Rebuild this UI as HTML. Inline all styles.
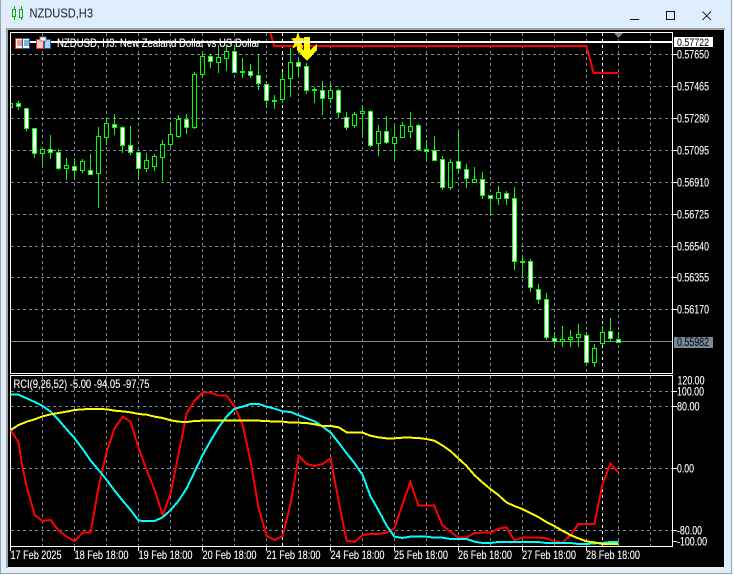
<!DOCTYPE html>
<html><head><meta charset="utf-8"><style>
html,body{margin:0;padding:0;width:734px;height:575px;overflow:hidden;background:#deeefc}
svg{display:block;position:absolute;left:0;top:0}
text{font-family:"Liberation Sans",sans-serif;font-size:12px;fill:#fff;stroke:#fff;stroke-width:.12px}
</style></head><body>
<svg width="734" height="575" viewBox="0 0 734 575">
<rect width="734" height="575" fill="#deeefc"/>
<path d="M0 0H734" stroke="#e8f2fc"/>
<rect x="0" y="0" width="1" height="575" fill="#9aa3ad"/>
<rect x="731" y="0" width="1" height="575" fill="#9aa3ad"/>
<rect x="732" y="0" width="2" height="575" fill="#f4f8fc"/>
<rect x="0" y="573" width="732" height="1" fill="#9aa3ad"/>
<rect x="0" y="574" width="734" height="1" fill="#f4f8fc"/>
<rect x="6" y="28" width="719" height="2" fill="#a0a0a0"/>
<rect x="6" y="28" width="2" height="540" fill="#a0a0a0"/>
<rect x="8" y="567" width="717" height="2" fill="#f0f0f0"/>
<rect x="724" y="30" width="1" height="538" fill="#f0f0f0"/>
<rect x="8" y="30" width="716" height="537" fill="#000"/>

<!-- title bar -->
<g shape-rendering="crispEdges" fill="none" stroke="#00b400">
<path d="M14.5 6V20M21.5 6V20"/>
<rect x="12.5" y="9.5" width="3" height="7" fill="#deeefc"/>
<rect x="19.5" y="9.5" width="3" height="8" fill="#deeefc"/>
</g>
<text x="29.5" y="17.5" style="font-size:13px;fill:#1c1c34;stroke:none" textLength="63.5" lengthAdjust="spacingAndGlyphs">NZDUSD,H3</text>
<rect x="630" y="19" width="9" height="1" fill="#111"/>
<rect x="666.5" y="11.5" width="8" height="8" fill="none" stroke="#111"/>
<path d="M702.5 11.5L711 20M711 11.5L702.5 20" stroke="#222" fill="none"/>

<!-- grid -->
<g stroke="#778899" fill="none" stroke-dasharray="3 3" shape-rendering="crispEdges">
<path d="M11 54.5H672M11 86.5H672M11 118.5H672M11 150.5H672M11 182.5H672M11 214.5H672M11 246.5H672M11 277.5H672M11 309.5H672"/>
<path d="M11 391.5H672M11 406.5H672M11 468.5H672M11 530.5H672"/>
<path d="M42.5 33V373M74.5 33V373M106.5 33V373M138.5 33V373M170.5 33V373M202.5 33V373M234.5 33V373M266.5 33V373M298.5 33V373M330.5 33V373M362.5 33V373M394.5 33V373M426.5 33V373M458.5 33V373M490.5 33V373M522.5 33V373M554.5 33V373M586.5 33V373M618.5 33V373M650.5 33V373"/>
<path d="M42.5 376V546M74.5 376V546M106.5 376V546M138.5 376V546M170.5 376V546M202.5 376V546M234.5 376V546M266.5 376V546M298.5 376V546M330.5 376V546M362.5 376V546M394.5 376V546M426.5 376V546M458.5 376V546M490.5 376V546M522.5 376V546M554.5 376V546M586.5 376V546M618.5 376V546M650.5 376V546"/>
</g>
<path d="M282.5 33V546M602.5 33V546" stroke="#fff" stroke-dasharray="3 3" fill="none" shape-rendering="crispEdges"/>
<path d="M11 341.5H672" stroke="#778899" fill="none" shape-rendering="crispEdges"/>

<!-- wicks -->
<path shape-rendering="crispEdges" stroke="#00ff00" fill="none" d="M18.5 101V110M26.5 108V131M34.5 128V158M42.5 149V165M50.5 135V159M58.5 149V170M66.5 158V180M74.5 158V178M82.5 159V173M90.5 154V175M98.5 127V208M106.5 117V145M114.5 114V135M122.5 126V153M130.5 126V155M138.5 152V178M146.5 153V172M154.5 154V171M162.5 140V181M170.5 122V147M178.5 115V138M186.5 114V134M194.5 72V129M202.5 53V78M210.5 54V68M218.5 45V73M226.5 45V71M234.5 45V73M242.5 58V78M250.5 64V78M258.5 54V90M266.5 84V106M274.5 95V109M282.5 72V103M290.5 48V97M298.5 58V76M306.5 63V94M314.5 87V103M322.5 81V115M330.5 84V103M338.5 89V118M346.5 112V130M354.5 112V128M362.5 107V135M370.5 110V147M378.5 125V156M386.5 116V144M394.5 125V160M402.5 122V138M410.5 112V138M418.5 124V151M426.5 140V161M434.5 136V161M442.5 156V190M450.5 159V190M458.5 132V173M466.5 164V188M474.5 167V183M482.5 172V199M490.5 195V216M498.5 186V205M506.5 191V205M514.5 187V270M522.5 255V277M530.5 259V292M538.5 284V304M546.5 293V340M554.5 332V347M562.5 326V347M570.5 330V347M578.5 324V347M586.5 332V365M594.5 344V367M602.5 326V345M610.5 318V342M618.5 332V343"/>

<!-- hollow bodies -->
<path shape-rendering="crispEdges" stroke="#00ff00" fill="#000" d="M10.5 103.5h2v4h-2zM40.5 149.5h4v4h-4zM64.5 165.5h4v3h-4zM80.5 161.5h4v9h-4zM96.5 136.5h4v37h-4zM104.5 123.5h4v14h-4zM144.5 160.5h4v8h-4zM152.5 156.5h4v10h-4zM160.5 144.5h4v13h-4zM168.5 134.5h4v10h-4zM176.5 119.5h4v17h-4zM192.5 74.5h4v53h-4zM200.5 56.5h4v18h-4zM216.5 57.5h4v5h-4zM224.5 51.5h4v7h-4zM280.5 79.5h4v20h-4zM288.5 62.5h4v16h-4zM328.5 90.5h4v8h-4zM352.5 114.5h4v11h-4zM360.5 111.5h4v2h-4zM376.5 131.5h4v12h-4zM392.5 137.5h4v6h-4zM400.5 125.5h4v12h-4zM408.5 126.5h4v5h-4zM448.5 162.5h4v25h-4zM472.5 179.5h4v3h-4zM496.5 192.5h4v6h-4zM560.5 339.5h4v2h-4zM568.5 337.5h4v2h-4zM576.5 334.5h4v3h-4zM592.5 348.5h4v14h-4zM600.5 332.5h4v11h-4z"/>
<!-- filled bodies -->
<path shape-rendering="crispEdges" stroke="#00ff00" fill="#fff" d="M16.5 103.5h4v3h-4zM24.5 108.5h4v20h-4zM32.5 128.5h4v25h-4zM48.5 149.5h4v3h-4zM56.5 152.5h4v16h-4zM72.5 166.5h4v4h-4zM88.5 170.5h4v4h-4zM112.5 124.5h4v3h-4zM120.5 127.5h4v18h-4zM128.5 145.5h4v7h-4zM136.5 152.5h4v16h-4zM184.5 119.5h4v8h-4zM208.5 56.5h4v5h-4zM232.5 51.5h4v21h-4zM240.5 71.5h4v1h-4zM248.5 71.5h4v4h-4zM256.5 75.5h4v8h-4zM264.5 84.5h4v16h-4zM272.5 100.5h4v1h-4zM296.5 62.5h4v4h-4zM304.5 66.5h4v24h-4zM312.5 89.5h4v1h-4zM320.5 90.5h4v8h-4zM336.5 90.5h4v22h-4zM344.5 117.5h4v10h-4zM368.5 111.5h4v34h-4zM384.5 131.5h4v11h-4zM416.5 125.5h4v24h-4zM424.5 149.5h4v2h-4zM432.5 150.5h4v10h-4zM440.5 159.5h4v28h-4zM456.5 161.5h4v7h-4zM464.5 169.5h4v9h-4zM480.5 179.5h4v16h-4zM488.5 195.5h4v3h-4zM504.5 193.5h4v5h-4zM512.5 198.5h4v63h-4zM520.5 261.5h4v1h-4zM528.5 261.5h4v26h-4zM536.5 289.5h4v10h-4zM544.5 299.5h4v38h-4zM552.5 338.5h4v3h-4zM584.5 335.5h4v27h-4zM608.5 331.5h4v7h-4zM616.5 339.5h4v3h-4z"/>

<!-- main red line -->
<path d="M270.5 33L274 46H586.5L593.5 73H618.5" fill="none" stroke="#ff0000" stroke-width="2" shape-rendering="crispEdges"/>
<!-- arrow & star -->
<polygon shape-rendering="crispEdges" fill="#ffff00" points="304,37 310,37 310,50 317,44 317,50 307,61 297,50 297,44 304,50"/>
<polygon shape-rendering="crispEdges" fill="#ffee00" points="298,32 300,38 306,38.5 301.5,42.5 303.5,48.5 298,45.5 292.5,48.5 294.5,42.5 290.5,38.5 296,38"/>
<!-- high line -->
<rect x="15" y="41" width="657" height="2" fill="#fff"/>

<!-- triangle -->
<polygon points="614,33 623,33 618.5,38" fill="#778899"/>

<!-- frames -->
<g fill="none" stroke="#fff" shape-rendering="crispEdges">
<rect x="10.5" y="32.5" width="662" height="341"/>
<rect x="10.5" y="375.5" width="662" height="171"/>
<path d="M672 54.5h5M672 86.5h5M672 118.5h5M672 150.5h5M672 182.5h5M672 214.5h5M672 246.5h5M672 277.5h5M672 309.5h5M672 391.5h5M672 406.5h5M672 468.5h5M672 530.5h5M672 541.5h5"/>
<path d="M10.5 546v5M74.5 546v5M138.5 546v5M202.5 546v5M266.5 546v5M330.5 546v5M394.5 546v5M458.5 546v5M522.5 546v5M586.5 546v5"/>
</g>

<!-- indicator lines -->
<g fill="none" stroke-width="6" shape-rendering="crispEdges" transform="translate(0 370) scale(.33333)">
<polyline stroke="#ff0000" points="32,180 56,218 65,280 80,350 104,435 128,453 152,450 176,482 200,500 224,514 248,488 272,487 296,350 320,245 344,175 368,140 392,155 416,235 440,300 464,360 488,435 512,370 536,250 560,130 584,92 608,68 632,68 656,77 680,77 704,110 728,165 752,275 776,415 800,498 824,510 848,498 872,400 896,257 920,282 944,288 968,282 992,265 1016,395 1040,512 1064,516 1088,495 1111,492 1135,492 1159,488 1183,475 1207,405 1231,335 1255,407 1279,407 1303,407 1327,465 1351,485 1375,503 1399,503 1423,489 1447,488 1471,488 1495,476 1519,472 1543,511 1567,503 1591,503 1615,503 1639,505 1663,514 1687,518 1711,497 1735,462 1759,462 1783,462 1807,345 1831,281 1855,307"/>
<polyline stroke="#00ffff" points="32,74 56,74 80,85 104,96 128,108 152,125 176,150 200,178 224,205 248,237 272,272 296,300 320,330 344,362 368,392 392,420 416,452 440,453 464,453 488,442 512,420 536,392 560,355 584,305 608,255 632,212 656,172 680,140 704,116 728,110 752,102 776,102 800,110 824,116 848,124 872,126 896,136 920,145 944,154 968,170 992,188 1016,218 1040,250 1064,280 1088,315 1111,378 1135,420 1159,465 1183,500 1207,504 1231,500 1255,500 1279,500 1303,503 1327,503 1351,507 1375,507 1399,507 1423,515 1447,519 1471,519 1495,516 1519,516 1543,516 1567,516 1591,516 1615,516 1639,519 1663,519 1687,519 1711,519 1735,522 1759,522 1783,520 1807,519 1831,516 1855,516"/>
<polyline stroke="#ffff00" points="32,180 56,165 80,155 104,148 128,139 152,133 176,129 200,125 224,120 248,118 272,117 296,117 320,118 344,122 368,124 392,127 416,132 440,134 464,140 488,144 512,151 536,155 560,156 584,153 608,152 632,152 656,152 680,152 704,152 728,152 752,152 776,152 800,153 824,155 848,155 872,158 896,158 920,159 944,163 968,168 992,168 1016,172 1040,187 1064,187 1088,188 1111,197 1135,202 1159,205 1183,205 1207,203 1231,203 1255,204 1279,207 1303,212 1327,226 1351,243 1375,265 1399,287 1423,315 1447,337 1471,357 1495,375 1519,397 1543,408 1567,417 1591,429 1615,441 1639,456 1663,468 1687,482 1711,495 1735,505 1759,514 1783,517 1807,522 1831,522 1855,522"/>
</g>

<!-- legend -->
<text x="57" y="47" textLength="203" lengthAdjust="spacingAndGlyphs">NZDUSD, H3:  New Zealand Dollar vs US Dollar</text>
<text x="13.5" y="388" textLength="136" lengthAdjust="spacingAndGlyphs">RCI(9,26,52) -5.00 -94.05 -97.75</text>
<g shape-rendering="crispEdges">
<rect x="15.5" y="38.5" width="7" height="10" fill="#fff" stroke="#e03020"/>
<rect x="22.5" y="38.5" width="7" height="10" fill="#fff" stroke="#1060a8"/>
<path d="M17 41h5M17 43h5M17 45h5" stroke="#e03020"/>
<path d="M24 41h5M24 43h5M24 45h5" stroke="#1060a8"/>
<rect x="36.5" y="39.5" width="7" height="9" fill="#ffc8c0" stroke="#e03020"/>
<rect x="44.5" y="39.5" width="6" height="9" fill="#a8d4f8" stroke="#1060a8"/>
<rect x="40" y="37" width="6" height="4" fill="#fff" stroke="#888" stroke-width=".8"/>
</g>

<!-- price labels -->
<g>
<text x="677" y="58.5" textLength="32" lengthAdjust="spacingAndGlyphs">0.57650</text>
<text x="677" y="90.5" textLength="32" lengthAdjust="spacingAndGlyphs">0.57465</text>
<text x="677" y="122.5" textLength="32" lengthAdjust="spacingAndGlyphs">0.57280</text>
<text x="677" y="154.5" textLength="32" lengthAdjust="spacingAndGlyphs">0.57095</text>
<text x="677" y="186.5" textLength="32" lengthAdjust="spacingAndGlyphs">0.56910</text>
<text x="677" y="218.5" textLength="32" lengthAdjust="spacingAndGlyphs">0.56725</text>
<text x="677" y="250.5" textLength="32" lengthAdjust="spacingAndGlyphs">0.56540</text>
<text x="677" y="281.5" textLength="32" lengthAdjust="spacingAndGlyphs">0.56355</text>
<text x="677" y="313.5" textLength="32" lengthAdjust="spacingAndGlyphs">0.56170</text>
<rect x="674" y="37" width="39" height="10" fill="#fff"/>
<text x="677" y="46" style="font-size:11px;fill:#000;stroke:none" textLength="32" lengthAdjust="spacingAndGlyphs">0.57722</text>
<rect x="674" y="337" width="39" height="11" fill="#778899"/>
<text x="677" y="346" style="fill:#000;stroke:none" textLength="32" lengthAdjust="spacingAndGlyphs">0.55982</text>
<text x="677.5" y="384.5" textLength="27" lengthAdjust="spacingAndGlyphs">120.00</text>
<text x="677" y="395.5" textLength="27" lengthAdjust="spacingAndGlyphs">100.00</text>
<text x="677" y="410.5" textLength="22.5" lengthAdjust="spacingAndGlyphs">80.00</text>
<text x="677" y="472.5" textLength="17" lengthAdjust="spacingAndGlyphs">0.00</text>
<text x="677" y="534.5" textLength="25" lengthAdjust="spacingAndGlyphs">-80.00</text>
<text x="677" y="545.5" textLength="30" lengthAdjust="spacingAndGlyphs">-100.00</text>
</g>

<!-- dates -->
<g>
<text x="10.5" y="559" textLength="51" lengthAdjust="spacingAndGlyphs">17 Feb 2025</text>
<text x="74.5" y="559" textLength="54" lengthAdjust="spacingAndGlyphs">18 Feb 18:00</text>
<text x="138.5" y="559" textLength="54" lengthAdjust="spacingAndGlyphs">19 Feb 18:00</text>
<text x="202.5" y="559" textLength="54" lengthAdjust="spacingAndGlyphs">20 Feb 18:00</text>
<text x="266.5" y="559" textLength="54" lengthAdjust="spacingAndGlyphs">21 Feb 18:00</text>
<text x="330.5" y="559" textLength="54" lengthAdjust="spacingAndGlyphs">24 Feb 18:00</text>
<text x="394" y="559" textLength="54" lengthAdjust="spacingAndGlyphs">25 Feb 18:00</text>
<text x="458" y="559" textLength="54" lengthAdjust="spacingAndGlyphs">26 Feb 18:00</text>
<text x="522" y="559" textLength="54" lengthAdjust="spacingAndGlyphs">27 Feb 18:00</text>
<text x="586" y="559" textLength="54" lengthAdjust="spacingAndGlyphs">28 Feb 18:00</text>
</g>
</svg>
</body></html>
